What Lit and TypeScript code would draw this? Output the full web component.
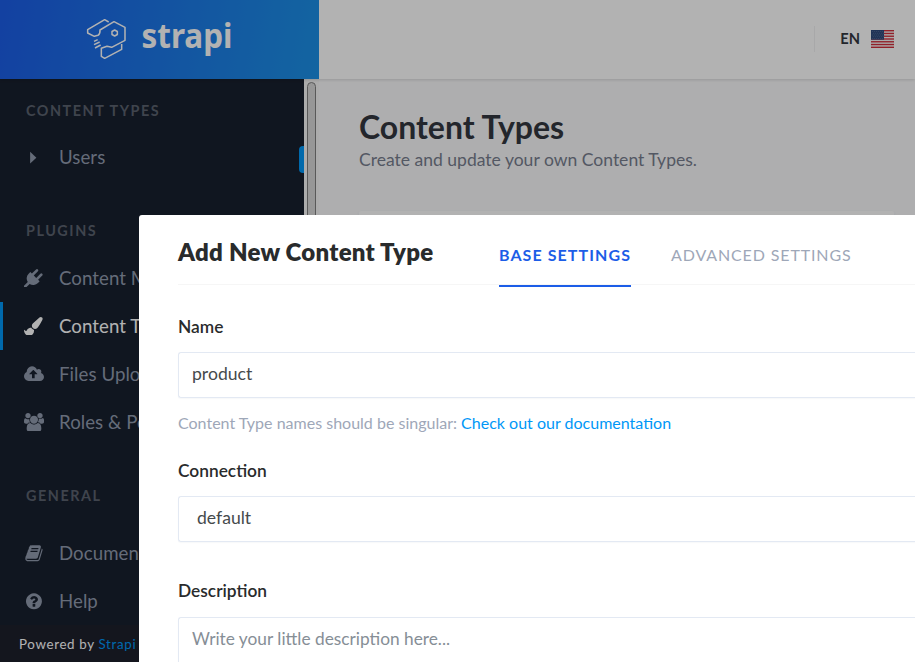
import { LitElement, html, css, svg } from "lit";
import { customElement } from "lit/decorators.js";
import { classMap } from "lit/directives/class-map.js";

type Icon = { box: string; width: number; path: string };

const ICONS: Record<string, Icon> = {
  plug: {
    box: "0 0 1792 1792",
    width: 18.67,
    path: "M1755 453q37 38 37 90.5t-37 90.5l-401 400 150 150-160 160q-163 163-389.5 186.5t-411.5-100.5l-362 362h-181v-181l362-362q-124-185-100.5-411.5t186.5-389.5l160-160 150 150 400-401q38-37 91-37t90 37 37 90.5-37 90.5l-400 401 234 234 401-400q38-37 91-37t90 37z",
  },
  brush: {
    box: "0 0 1792 1792",
    width: 18.67,
    path: "M1615 0q70 0 122.5 46.5t52.5 116.5q0 63-45 151-332 629-465 752-97 91-218 91-126 0-216.5-92.5t-90.5-219.5q0-128 92-212l638-579q59-54 130-54zm-909 1034q39 76 106.5 130t150.5 76l1 71q4 213-129.5 347t-348.5 134q-123 0-218-46.5t-152.5-127.5-86.5-183-29-220q7 5 41 30t62 44.5 59 36.5 46 17q41 0 55-37 25-66 57.5-112.5t69.5-76 88-47.5 103-25.5 125-10.5z",
  },
  cloud: {
    box: "0 0 1920 1792",
    width: 20,
    path: "M1280 864q0-14-9-23l-352-352q-9-9-23-9t-23 9l-351 351q-10 12-10 24 0 14 9 23t23 9h224v352q0 13 9.5 22.5t22.5 9.5h192q13 0 22.5-9.5t9.5-22.5v-352h224q13 0 22.5-9.5t9.5-22.5zm640 288q0 159-112.5 271.5t-271.5 112.5h-1088q-185 0-316.5-131.5t-131.5-316.5q0-130 70-240t188-165q-2-30-2-43 0-212 150-362t362-150q156 0 285.5 87t188.5 231q71-62 166-62 106 0 181 75t75 181q0 76-41 138 130 31 213.5 135.5t83.5 238.5z",
  },
  users: {
    box: "64 0 1920 1792",
    width: 20,
    path: "M657 896q-162 5-265 128h-134q-82 0-138-40.5t-56-118.5q0-353 124-353 6 0 43.5 21t97.5 42.5 119 21.5q67 0 133-23-5 37-5 66 0 159 93 290zm1071 637q0 120-73 189.5t-194 69.5h-874q-121 0-194-69.5t-73-189.5q0-53 3.5-103.5t14-109 26.5-108.5 43-97.5 62-81 85.5-53.5 111.5-20q10 0 43 21.5t73 48 107 48 135 21.5 135-21.5 107-48 73-48 43-21.5q61 0 111.5 20t85.5 53.5 62 81 43 97.5 26.5 108.5 14 109 3.5 103.5zm-1024-1277q0 106-75 181t-181 75-181-75-75-181 75-181 181-75 181 75 75 181zm704 384q0 159-112.5 271.5t-271.5 112.5-271.5-112.5-112.5-271.5 112.5-271.5 271.5-112.5 271.5 112.5 112.5 271.5zm576 225q0 78-56 118.5t-138 40.5h-134q-103-123-265-128 93-131 93-290 0-29-5-66 66 23 133 23 59 0 119-21.5t97.5-42.5 43.5-21q124 0 124 353zm-128-609q0 106-75 181t-181 75-181-75-75-181 75-181 181-75 181 75 75 181z",
  },
  book: {
    box: "-60 0 1792 1792",
    width: 18.67,
    path: "M1703 478q40 57 18 129l-275 906q-19 64-76.5 107.5t-122.5 43.5h-923q-77 0-148.5-53.5t-99.5-131.5q-24-67-2-127 0-4 3-27t4-37q1-8-3-21.5t-3-19.5q2-11 8-21t16.5-23.5 16.5-23.5q23-38 45-91.5t30-91.5q3-10 .5-30t-.5-28q3-11 17-28t17-23q21-36 42-92t25-90q1-9-2.5-32t.5-28q4-13 22-30.5t22-22.5q19-26 42.5-84.5t27.5-96.5q1-8-3-25.5t-2-26.5q2-8 9-18t18-23 17-21q8-12 16.5-30.5t15-35 16-36 19.5-32 26.5-23.5 36-11.5 47.5 5.5l-1 3q38-9 51-9h761q74 0 114 56t18 130l-274 906q-36 119-71.5 153.5t-128.5 34.5h-869q-27 0-38 15-11 16-1 43 24 70 144 70h923q29 0 56-15.5t35-41.5l300-987q7-22 5-57 38 15 59 43zm-1064 2q-4 13 2 22.5t20 9.5h608q13 0 25.5-9.5t16.5-22.5l21-64q4-13-2-22.5t-20-9.5h-608q-13 0-25.5 9.5t-16.5 22.5zm-83 256q-4 13 2 22.5t20 9.5h608q13 0 25.5-9.5t16.5-22.5l21-64q4-13-2-22.5t-20-9.5h-608q-13 0-25.5 9.5t-16.5 22.5z",
  },
  help: {
    box: "-60 0 1792 1792",
    width: 18.67,
    path: "M1024 1376v-192q0-14-9-23t-23-9h-192q-14 0-23 9t-9 23v192q0 14 9 23t23 9h192q14 0 23-9t9-23zm256-672q0-88-55.5-163t-138.5-116-170-41q-243 0-371 213-15 24 8 42l132 100q7 6 19 6 16 0 25-12 53-68 86-92 34-24 86-24 48 0 85.5 26t37.5 59q0 38-20 61t-68 45q-63 28-115.5 86.5t-52.5 125.5v36q0 14 9 23t23 9h192q14 0 23-9t9-23q0-19 21.5-49.5t54.5-49.5q32-18 49-28.5t46-35 44.5-48 28-60.5 12.5-81zm384 192q0 209-103 385.5t-279.5 279.5-385.5 103-385.5-103-279.5-279.5-103-385.5 103-385.5 279.5-279.5 385.5-103 385.5 103 279.5 279.5 103 385.5z",
  },
  caret: {
    box: "0 0 1792 1792",
    width: 18.67,
    path: "M1190 925 590 1500v-1150z",
  },
};

const SECTIONS = [
  { title: "Content Types", cls: "types", items: [{ icon: "caret", label: "Users" }] },
  {
    title: "Plugins",
    cls: "plugins",
    items: [
      { icon: "plug", label: "Content Manager" },
      { icon: "brush", label: "Content Type Builder", active: true },
      { icon: "cloud", label: "Files Upload" },
      { icon: "users", label: "Roles & Permissions" },
    ],
  },
  {
    title: "General",
    cls: "general",
    items: [
      { icon: "book", label: "Documentation" },
      { icon: "help", label: "Help" },
    ],
  },
];

@customElement("side-menu")
export class SideMenu extends LitElement {
  static styles = css`
    :host {
      display: flex;
      flex-direction: column;
      width: 304px;
      flex: none;
      background: #18202e;
      overflow: hidden;
      position: relative;
    }
    .title {
      height: 24px;
      line-height: 24px;
      padding-left: 26px;
      font-size: 14.4px;
      font-weight: 700;
      letter-spacing: 1.53px;
      text-transform: uppercase;
      color: #5b626f;
    }
    .types { padding-top: 20px; }
    .types .list { padding-top: 10px; }
    .plugins { padding-top: 38px; }
    .plugins .list { padding-top: 11px; }
    .general { padding-top: 38px; }
    .general .list { padding-top: 21px; }
    .item {
      display: flex;
      align-items: center;
      height: 48px;
      box-sizing: border-box;
      border-left: 3px solid transparent;
      padding-left: 21px;
      font-size: 18.67px;
      letter-spacing: 0.05px;
      color: #919bae;
      white-space: nowrap;
    }
    .item.active { border-left-color: #0097f7; color: #fff; }
    .icon { width: 20px; margin-right: 15px; display: flex; justify-content: center; }
    .icon svg { display: block; flex: none; height: 18.67px; margin-left: -0.6px; fill: currentColor; }
    .handle {
      position: absolute;
      right: 0;
      top: 67px;
      width: 5px;
      height: 27px;
      background: #0097f7;
      border-radius: 4px 0 0 4px;
    }
    .foot {
      flex: 1;
      background: #1d202c;
      padding-left: 19px;
      line-height: 38px;
      font-size: 13.33px;
      letter-spacing: 0.66px;
      color: #fff;
    }
    .foot span { color: #0097f7; }
  `;

  render() {
    return html`
      ${SECTIONS.map(
        (s) => html`<section class=${s.cls}>
          <div class="title">${s.title}</div>
          <div class="list">
            ${s.items.map((i: { icon: string; label: string; active?: boolean }) => {
              const icon = ICONS[i.icon];
              return html`<div class=${classMap({ item: true, active: !!i.active })}>
                <span class="icon"
                  ><svg viewBox=${icon.box} width=${icon.width}>${svg`<path d=${icon.path} />`}</svg></span
                >${i.label}
              </div>`;
            })}
          </div>
        </section>`
      )}
      <div class="handle"></div>
      <div class="foot">Powered by <span>Strapi</span></div>
    `;
  }
}

@customElement("top-bar")
export class TopBar extends LitElement {
  static styles = css`
    :host {
      display: flex;
      height: 79px;
      flex: none;
      background: #fff;
      box-shadow: 0 1px 3px rgba(0, 0, 0, 0.14);
      position: relative;
    }
    .brand { width: 319px; height: 79px; background: linear-gradient(100deg, #1c5de7, #1c91e7); }
    .brand svg { display: block; }
    .outline { fill: none; stroke: #fff; stroke-width: 4.6; stroke-linejoin: round; }
    .word { fill: #fff; font: 700 34px "Noto Sans", sans-serif; }
    .locale {
      margin-left: auto;
      margin-right: 21px;
      display: flex;
      align-items: center;
      height: 77px;
      font-size: 14.67px;
      font-weight: 700;
      color: #333740;
    }
    .rule { width: 1px; height: 26px; background: #f1f1f2; margin-right: 25px; }
    .flag { display: block; margin-left: 11px; }
    .red { fill: #d22f3c; }
    .white { fill: #f4f4f4; }
    .blue { fill: #2f4a7c; }
    .star { fill: #62779f; }
  `;

  render() {
    const stars = [];
    for (let r = 0; r < 5; r++)
      for (let c = 0; c < 6; c++)
        stars.push(svg`<rect class="star" x=${0.9 + c * 2 + (r % 2)} y=${1 + r * 1.8} width="0.8" height="0.8" />`);
    return html`
      <div class="brand">
        <svg width="319" height="79" viewBox="0 0 319 79">
          <g transform="scale(0.33333)" class="outline">
            <path d="M326 66L314 59L263 89V99L283 109L294 106Q301 101 300 90L342 65L375 82V121L335 142L321 139L304 145V169L314 175L365 148V132" />
            <path d="M344 90L352 94.5V103.5L344 108L336 103.5V94.5Z" />
            <path d="M282 124L293 119M282 134L299 126M285 144L302 135" />
          </g>
          <text class="word" x="141.5" y="47.7" textLength="91" lengthAdjust="spacingAndGlyphs">strapi</text>
        </svg>
      </div>
      <div class="locale">
        <div class="rule"></div>
        EN
        <svg class="flag" width="23" height="18" viewBox="0 0 23 18">
          <rect class="white" width="23" height="18" />
          ${[0, 1, 2, 3, 4, 5, 6].map((i) => svg`<rect class="red" y=${i * 2.77} width="23" height="1.38" />`)}
          <rect class="blue" width="13" height="9.7" />
          ${stars}
        </svg>
      </div>
    `;
  }
}

@customElement("content-type-modal")
export class ContentTypeModal extends LitElement {
  static styles = css`
    :host {
      display: block;
      box-sizing: border-box;
      background: #fff;
      border-radius: 3px 0 0 0;
      padding-left: 39px;
      overflow: hidden;
      color: #292b2c;
    }
    .head {
      display: flex;
      align-items: baseline;
      height: 70px;
      box-sizing: border-box;
      padding-top: 21.5px;
      border-bottom: 1px solid #f6f6f6;
      white-space: nowrap;
    }
    .title { width: 321px; font-size: 24px; font-weight: 800; letter-spacing: 0.25px; line-height: 29px; }
    .tab {
      font-size: 16px;
      line-height: 19px;
      letter-spacing: 0.87px;
      text-transform: uppercase;
      color: #9ea7b8;
      margin-right: 39px;
      padding-bottom: 21px;
      border-bottom: 2px solid transparent;
    }
    .tab.on { color: #1c5de7; font-weight: 700; letter-spacing: 1.08px; margin-right: 40px; border-color: #1c5de7; }
    .label { height: 24px; line-height: 24px; font-size: 17.33px; font-weight: 600; margin-bottom: 13px; }
    .name { margin-top: 30px; }
    .conn { margin-top: 24px; }
    .desc { margin-top: 37px; margin-bottom: 14px; }
    .input {
      height: 46px;
      box-sizing: border-box;
      border: 1px solid #e3e9f3;
      border-right: 0;
      border-radius: 3px 0 0 3px;
      box-shadow: 0 1px 1px rgba(104, 118, 142, 0.05);
      padding-left: 13px;
      line-height: 42px;
      font-size: 17.6px;
      color: #464a4c;
    }
    .select { padding-left: 18px; }
    .area { height: 90px; font-size: 17.3px; color: #868e96; }
    .help { margin-top: 13px; height: 24px; line-height: 24px; font-size: 16.03px; color: #9ea7b8; }
    .help span { color: #0097f7; }
  `;

  render() {
    return html`
      <div class="head">
        <div class="title">Add New Content Type</div>
        <div class="tab on">Base settings</div>
        <div class="tab">Advanced settings</div>
      </div>
      <div class="label name">Name</div>
      <div class="input">product</div>
      <div class="help">Content Type names should be singular: <span>Check out our documentation</span></div>
      <div class="label conn">Connection</div>
      <div class="input select">default</div>
      <div class="label desc">Description</div>
      <div class="input area">Write your little description here...</div>
    `;
  }
}

@customElement("app-root")
export class AppRoot extends LitElement {
  static styles = css`
    :host {
      display: flex;
      flex-direction: column;
      width: 915px;
      height: 662px;
      overflow: hidden;
      position: relative;
      font-family: Lato, "Liberation Sans", sans-serif;
    }
    top-bar { z-index: 1; }
    .body { display: flex; flex: 1; min-height: 0; }
    .scroll { width: 15px; box-sizing: border-box; background: #f6f6f6; padding: 3px 3px 0; }
    .thumb {
      width: 9px;
      height: 400px;
      box-sizing: border-box;
      border: 1px solid #808080;
      border-radius: 5px;
      background: #d8d8d8;
    }
    .main { flex: 1; background: #fafafb; padding: 28px 21px 0 40px; }
    .h1 { font-size: 32px; line-height: 40px; font-weight: 700; color: #333740; }
    .sub { font-size: 17.54px; line-height: 24px; margin-top: 1px; color: #787e8f; }
    .card { margin-top: 39px; height: 400px; background: #fff; border-radius: 2px; box-shadow: 0 2px 4px #e3e9f3; }
    .backdrop { position: absolute; inset: 0; z-index: 2; background: rgba(0, 0, 0, 0.3); }
    content-type-modal { position: absolute; z-index: 3; left: 139px; top: 215px; right: 0; bottom: 0; }
  `;

  render() {
    return html`
      <top-bar></top-bar>
      <div class="body">
        <side-menu></side-menu>
        <div class="scroll"><div class="thumb"></div></div>
        <div class="main">
          <div class="h1">Content Types</div>
          <div class="sub">Create and update your own Content Types.</div>
          <div class="card"></div>
        </div>
      </div>
      <div class="backdrop"></div>
      <content-type-modal></content-type-modal>
    `;
  }
}
